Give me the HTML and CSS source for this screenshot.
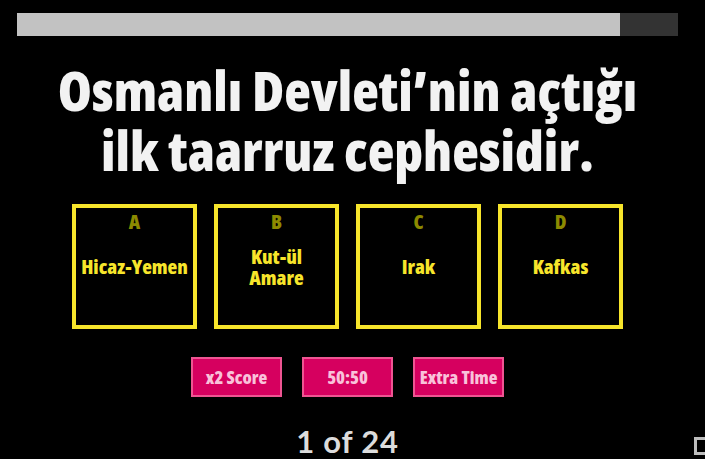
FILE: index.html
```html
<!DOCTYPE html>
<html lang="tr">
<head>
<meta charset="utf-8">
<title>Quiz</title>
<link rel="stylesheet" href="styles.css">
</head>
<body>
<div class="quiz">
  <div class="progress"><div class="progress-fill" style="width:91.2%"></div></div>
  <h1 class="question">Osmanlı Devleti’nin açtığı<br>ilk taarruz cephesidir.</h1>
  <div class="answers">
    <div class="answer"><span class="letter">A</span><span class="text">Hicaz-Yemen</span></div>
    <div class="answer"><span class="letter">B</span><span class="text">Kut-ül<br>Amare</span></div>
    <div class="answer"><span class="letter">C</span><span class="text">Irak</span></div>
    <div class="answer"><span class="letter">D</span><span class="text">Kafkas</span></div>
  </div>
  <div class="powerups">
    <button class="powerup">x2 Score</button>
    <button class="powerup">50:50</button>
    <button class="powerup">Extra Time</button>
  </div>
  <div class="counter">1 of 24</div>
</div>
<div class="corner-icon"></div>
</body>
</html>
```
FILE: styles.css
```css
html, body {
  margin: 0;
  padding: 0;
  background: #000;
  height: 100%;
  overflow: hidden;
}
body {
  position: relative;
  font-family: "Open Sans", sans-serif;
}
.quiz {
  display: flex;
  flex-direction: column;
  align-items: center;
  padding: 13px 27px 0 17px;
}
.progress {
  align-self: stretch;
  height: 23px;
  background: #333;
  display: flex;
}
.progress-fill {
  background: #c2c2c2;
  height: 100%;
}
.question {
  margin: 24px 0 0;
  color: #f2f2f2;
  font-family: "Open Sans", sans-serif;
  font-stretch: 75%;
  font-weight: 800;
  font-size: 55px;
  line-height: 60px;
  text-align: center;
  white-space: nowrap;
}
.answers {
  display: flex;
  gap: 17px;
  margin-top: 24px;
}
.answer {
  box-sizing: border-box;
  width: 125px;
  height: 125px;
  border: 4px solid #f7e52b;
  display: flex;
  flex-direction: column;
  align-items: center;
  font-family: "Open Sans", sans-serif;
  font-stretch: 75%;
  font-weight: 800;
}
.letter {
  color: #8c8a00;
  font-size: 20px;
  line-height: 20px;
  margin-top: 4px;
}
.text {
  color: #f7e52b;
  font-size: 20px;
  line-height: 21px;
  text-align: center;
  margin-top: 24px;
  white-space: nowrap;
}
.answer:nth-child(2) .text {
  margin-top: 14px;
}
.powerups {
  display: flex;
  gap: 20px;
  margin-top: 28px;
}
.powerup {
  box-sizing: border-box;
  width: 91px;
  height: 40px;
  background: #d6005f;
  border: 2px solid #ee5592;
  color: #f9c2da;
  font-family: "Open Sans", sans-serif;
  font-stretch: 75%;
  font-weight: 800;
  font-size: 18px;
  padding: 0;
  white-space: nowrap;
}
.counter {
  margin-top: 30px;
  color: #dcdcdc;
  font-family: Lato, sans-serif;
  font-weight: bold;
  font-size: 31px;
  line-height: 28px;
  letter-spacing: 0.8px;
}
.corner-icon {
  position: absolute;
  left: 694px;
  top: 437px;
  width: 10px;
  height: 12px;
  border: 3px solid #bdbdbd;
}
```
